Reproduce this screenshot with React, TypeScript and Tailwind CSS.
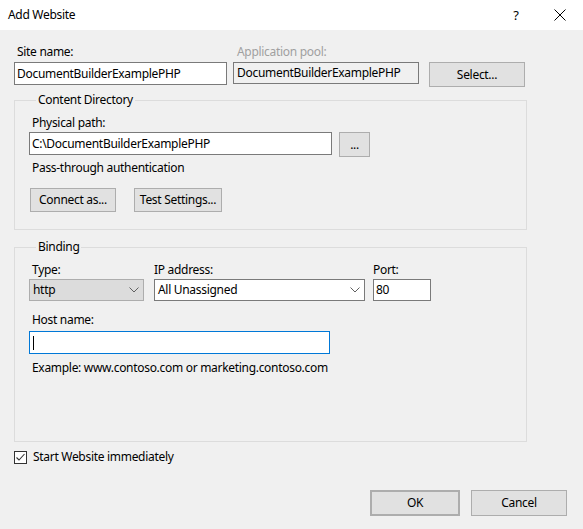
import React from "react";

const Chevron = () => (
  <svg width="10" height="6" viewBox="0 0 10 6" className="shrink-0">
    <path d="M0.5 0.5 L5 5 L9.5 0.5" fill="none" stroke="#606060" strokeWidth="1" />
  </svg>
);

const Btn = ({ children, className = "" }: { children: React.ReactNode; className?: string }) => (
  <div
    className={
      "flex items-center justify-center bg-[#e1e1e1] border border-[#adadad] text-black " + className
    }
  >
    {children}
  </div>
);

export default function App() {
  return (
    <div
      className="w-[583px] h-[529px] bg-[#f0f0f0] flex flex-col text-[12px] leading-[16px] tracking-[-0.3px] text-black overflow-hidden"
      style={{ fontFamily: '"Segoe UI", "Noto Sans", sans-serif' }}
    >
      {/* Title bar */}
      <div className="h-[30px] bg-white flex items-center shrink-0">
        <div className="pl-[8px] flex-1">Add Website</div>
        <div className="w-[30px] text-center mr-[14px] text-[13px]">?</div>
        <div className="w-[30px] flex justify-center mr-[8px]">
          <svg width="12" height="12" viewBox="0 0 12 12">
            <path d="M0.5 0.5 L11.5 11.5 M11.5 0.5 L0.5 11.5" stroke="#000" strokeWidth="1" />
          </svg>
        </div>
      </div>

      {/* Site name row */}
      <div className="flex items-start pl-[14px] mt-[14px]">
        <div className="flex flex-col w-[213px]">
          <div className="pl-[3px] h-[16px] mb-[2px]">Site name:</div>
          <div className="h-[23px] bg-white border border-[#7a7a7a] flex items-center pl-[2px]">
            DocumentBuilderExamplePHP
          </div>
        </div>
        <div className="flex flex-col w-[186px] ml-[6px]">
          <div className="pl-[4px] h-[16px] mb-[2px] text-[#a0a0a0]">Application pool:</div>
          <div className="h-[22px] bg-[#f0f0f0] border border-[#7a7a7a] flex items-center pl-[3px]">
            DocumentBuilderExamplePHP
          </div>
        </div>
        <Btn className="w-[96px] h-[25px] ml-[10px] mt-[18px]">Select...</Btn>
      </div>

      {/* Content Directory */}
      <fieldset className="ml-[14px] mt-[5px] w-[513px] h-[138px] border border-[#dcdcdc] pl-[14px]">
        <legend className="ml-[7px] px-[2px]">Content Directory</legend>
        <div className="pt-[7px] pl-[3px] h-[16px] box-content">Physical path:</div>
        <div className="flex items-start mt-[1px]">
          <div className="w-[303px] h-[23px] bg-white border border-[#7a7a7a] flex items-center pl-[2px]">
            C:\DocumentBuilderExamplePHP
          </div>
          <Btn className="w-[31px] h-[25px] ml-[7px]">...</Btn>
        </div>
        <div className="pl-[3px] mt-[3px]">Pass-through authentication</div>
        <div className="flex mt-[12px]">
          <Btn className="w-[86px] h-[24px] ml-[1px]">Connect as...</Btn>
          <Btn className="w-[88px] h-[24px] ml-[18px]">Test Settings...</Btn>
        </div>
      </fieldset>

      {/* Binding */}
      <fieldset className="ml-[14px] mt-[9px] w-[513px] h-[203px] border border-[#dcdcdc] pl-[14px]">
        <legend className="ml-[7px] px-[2px]">Binding</legend>
        <div className="flex items-start pt-[7px]">
          <div className="flex flex-col w-[115px]">
            <div className="pl-[3px] h-[16px] mb-[1px]">Type:</div>
            <div className="h-[22px] bg-[#dcdcdc] border border-[#adadad] flex items-center justify-between pl-[3px] pr-[4px]">
              <span>http</span>
              <Chevron />
            </div>
          </div>
          <div className="flex flex-col w-[211px] ml-[10px]">
            <div className="h-[16px] mb-[1px]">IP address:</div>
            <div className="h-[22px] bg-white border border-[#7a7a7a] flex items-center justify-between pl-[3px] pr-[4px]">
              <span>All Unassigned</span>
              <Chevron />
            </div>
          </div>
          <div className="flex flex-col w-[58px] ml-[8px]">
            <div className="h-[16px] mb-[1px]">Port:</div>
            <div className="h-[22px] bg-white border border-[#7a7a7a] flex items-center pl-[2px]">80</div>
          </div>
        </div>
        <div className="pl-[3px] mt-[11px] h-[16px]">Host name:</div>
        <div className="mt-[3px] w-[301px] h-[23px] bg-white border border-[#0078d7] flex items-center pl-[3px]">
          <div className="w-[1px] h-[14px] bg-black" />
        </div>
        <div className="pl-[3px] mt-[6px]">Example: www.contoso.com or marketing.contoso.com</div>
      </fieldset>

      {/* Checkbox */}
      <div className="flex items-center ml-[14px] mt-[7px]">
        <div className="w-[13px] h-[13px] border border-[#333333] bg-white flex items-center justify-center">
          <svg width="11" height="11" viewBox="0 0 11 11">
            <path d="M1.5 5.5 L4 8 L9.5 2" fill="none" stroke="#333333" strokeWidth="1.1" />
          </svg>
        </div>
        <span className="ml-[6px]">Start Website immediately</span>
      </div>

      {/* Buttons */}
      <div className="flex justify-end mt-[25px] pr-[16px]">
        <Btn className="w-[90px] h-[26px] border-2 border-[#0078d7]">OK</Btn>
        <Btn className="w-[96px] h-[26px] ml-[11px]">Cancel</Btn>
      </div>
    </div>
  );
}
